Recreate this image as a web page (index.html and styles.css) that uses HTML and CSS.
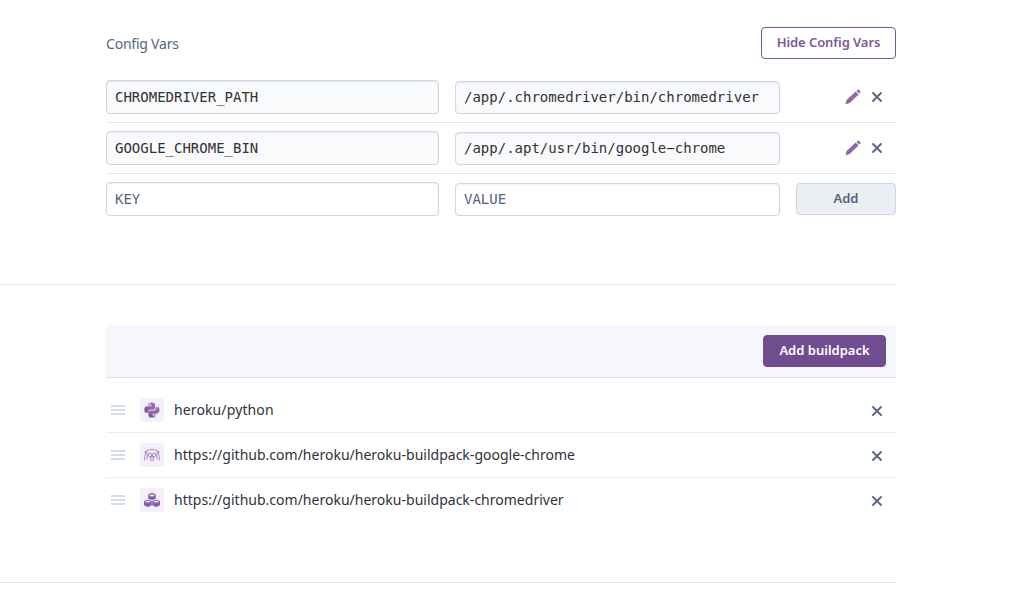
FILE: index.html
```html
<!DOCTYPE html>
<html lang="en">
<head>
<meta charset="utf-8">
<title>Settings</title>
<link rel="stylesheet" href="styles.css">
</head>
<body>
<svg width="0" height="0" class="sprite" aria-hidden="true">
  <defs>
    <linearGradient id="purple" x1="0" y1="0" x2="0" y2="1"><stop offset="0" stop-color="#a078ba"/><stop offset="1" stop-color="#75539b"/></linearGradient>
    <symbol id="close" viewBox="0 0 12 12"><path d="M2 2l8 8M10 2l-8 8" stroke="#596981" stroke-width="1.900" stroke-linecap="round"/></symbol>
    <symbol id="pencil" viewBox="0 0 16 16"><path d="M.5 15.500l1-4.400 9.200-8.500 2.900 2.900-9 8.500zM11.500 1.900l.9-.9q.8-.8 1.700 0l1.100 1.100q.8.800 0 1.600l-.9.900z" fill="#8d66ad"/></symbol>
    <symbol id="grip" viewBox="0 0 14 10"><path d="M.5 1h13M.5 5h13M.5 9h13" stroke="#c5d2e4" stroke-width="1.600" stroke-linecap="round"/></symbol>
  </defs>
</svg>
<main class="page">
  <section class="config">
    <header class="config-head"><h2 class="title">Config Vars</h2><button class="btn outline">Hide Config Vars</button></header>
    <div class="var-row">
      <div class="field key">CHROMEDRIVER_PATH</div><div class="field value">/app/.chromedriver/bin/chromedriver</div>
      <div class="actions"><svg class="pencil"><use href="#pencil"/></svg><svg class="close"><use href="#close"/></svg></div>
    </div>
    <div class="var-row">
      <div class="field key">GOOGLE_CHROME_BIN</div><div class="field value">/app/.apt/usr/bin/google&#8722;chrome</div>
      <div class="actions"><svg class="pencil"><use href="#pencil"/></svg><svg class="close"><use href="#close"/></svg></div>
    </div>
    <div class="var-row last">
      <div class="field key blank">KEY</div><div class="field value blank">VALUE</div>
      <button class="btn neutral">Add</button>
    </div>
  </section>
  <section class="buildpacks">
    <header class="pack-head"><button class="btn primary">Add buildpack</button></header>
    <ul class="packs">
      <li class="pack">
        <svg class="grip"><use href="#grip"/></svg>
        <span class="badge"><svg class="logo" viewBox="0 0 16 16"><g fill="url(#purple)"><path d="M4.200 2.600Q4.200.4 7.600.4t3.500 2.200v3.200q0 1.700-1.700 1.700H6.200Q4.300 7.500 4.300 9.300v1.500H2.600Q.3 10.800.3 7.700t2.300-3.500h5.100v-.6H4.200z"/><path d="M11.400 13.400q0 2.200-3.400 2.200t-3.600-2.200v-3.200q0-1.800 1.800-1.800h3.200q2.300 0 2.300-2.200V4.900h1.400q2.500 0 2.500 3.100t-2.500 3.800H7.900v.6h3.500z"/></g><g fill="#f5eefb"><circle cx="6" cy="2.200" r=".7"/><circle cx="9.700" cy="13.800" r=".7"/></g></svg></span>
        <span class="name n1">heroku/python</span><svg class="close"><use href="#close"/></svg>
      </li>
      <li class="pack">
        <svg class="grip"><use href="#grip"/></svg>
        <span class="badge"><svg class="logo" viewBox="0 0 16 16" fill="none" stroke="#a27fbe" stroke-width=".9"><path d="M.7 13.500V10L2 4.300Q4.500 2.400 8 2.400t6 1.900l1.300 5.700v3.500M2 4.300l1.200 1.300v6.600M14 4.300l-1.200 1.300v6.600M6.600 10.200l-.3 3h3.400l-.3-3M.7 5.300L2 4.300M15.300 5.300L14 4.300"/><circle cx="5.900" cy="7.900" r="1.800"/><circle cx="10.100" cy="7.900" r="1.800"/><path d="M7.200 10.400L8 9.300l.8 1.100z"/></svg></span>
        <span class="name n2">https://github.com/heroku/heroku-buildpack-google-chrome</span><svg class="close"><use href="#close"/></svg>
      </li>
      <li class="pack">
        <svg class="grip"><use href="#grip"/></svg>
        <span class="badge"><svg class="logo" viewBox="0 0 16 16"><g fill="url(#purple)"><path d="M4.200 2.300L8 .5l3.800 1.800v4.300L8 8.100 4.200 6.600z"/><path d="M0 9L3.900 7.200 7.800 9v4.200l-3.900 1.800L0 13.200z"/><path d="M8.200 9l3.900-1.800L16 9v4.200l-3.900 1.800-3.900-1.800z"/></g><g fill="#f5eefb"><ellipse cx="8" cy="3.400" rx="2.200" ry=".9"/><ellipse cx="3.900" cy="9.600" rx="2.200" ry=".9"/><ellipse cx="12.100" cy="9.600" rx="2.200" ry=".9"/></g></svg></span>
        <span class="name n3">https://github.com/heroku/heroku-buildpack-chromedriver</span><svg class="close"><use href="#close"/></svg>
      </li>
    </ul>
  </section>
</main>
</body>
</html>
```
FILE: styles.css
```css
* { box-sizing: border-box; }
body { margin: 0; background: #fff; color: #303237; font: 14px/20px "Noto Sans", "Open Sans", sans-serif; overflow: hidden; }
svg { display: block; flex: none; }
.sprite { position: absolute; }
.page { width: 896px; }
.config { height: 285px; padding: 27px 0 0 106px; border-bottom: 1px solid #e3e5f0; }
.config-head { display: flex; justify-content: space-between; height: 45px; }
.title { margin: 7px 0 0; font-size: 14px; font-weight: 400; line-height: 20px; color: #54647d; letter-spacing: -.22px; }
.btn { display: flex; align-items: center; justify-content: center; height: 32px; padding: 0 0 2px; border: 1px solid #79589f; border-radius: 4px; font: 600 13px/20px "Noto Sans", "Open Sans", sans-serif; white-space: nowrap; }
.outline { width: 135px; background: #fff; color: #79589f; letter-spacing: -.08px; }
.neutral { width: 100px; margin: 0 0 1px 16px; background: #ebeef3; border-color: #cbd6e6; color: #54647d; }
.primary { width: 123px; background: #704d91; border-color: #704d91; color: #fff; letter-spacing: 0; }
.var-row { display: flex; align-items: flex-end; height: 51px; padding-bottom: 8px; border-bottom: 1px solid #e2e8f0; }
.last { border-bottom-color: transparent; }
.field { display: flex; align-items: center; border: 1px solid #cbd6e6; border-radius: 4px; padding: 0 8px; background: #f9fafc; box-shadow: inset 0 1px 2px rgba(120,145,180,.14); font: 14px/20px "DejaVu Sans Mono", monospace; white-space: nowrap; }
.key { width: 333px; height: 34px; }
.value { width: 325px; height: 33px; margin-left: 16px; padding-bottom: 1px; }
.blank { background: #fff; color: #54647d; }
.actions { display: flex; flex: 1; align-items: center; justify-content: flex-end; height: 34px; gap: 10px; padding-right: 13px; }
.pencil { width: 16px; height: 16px; }
.close { width: 12px; height: 12px; }
.buildpacks { height: 298px; padding: 40px 0 0 106px; border-bottom: 1px solid #e3e5f0; }
.pack-head { display: flex; justify-content: flex-end; height: 53px; padding: 10px; background: #f6f7fb; border-bottom: 1px solid #dcdfea; border-radius: 4px 4px 0 0; }
.packs { list-style: none; margin: 10px 0 0; padding: 0; }
.pack { display: flex; align-items: center; height: 45px; padding: 0 13px 0 5px; border-bottom: 1px solid #ebecee; }
.pack:last-child { border-bottom-color: transparent; }
.pack .close { margin-top: 2px; }
.grip { width: 14px; height: 10px; }
.badge { display: flex; align-items: center; justify-content: center; width: 24px; height: 24px; margin-left: 15px; border-radius: 4px; background: #f5eefb; }
.logo { width: 16px; height: 16px; }
.name { flex: 1; margin-left: 10px; white-space: nowrap; }
.n1 { letter-spacing: .12px; }
.n2, .n3 { letter-spacing: .01px; }
```
